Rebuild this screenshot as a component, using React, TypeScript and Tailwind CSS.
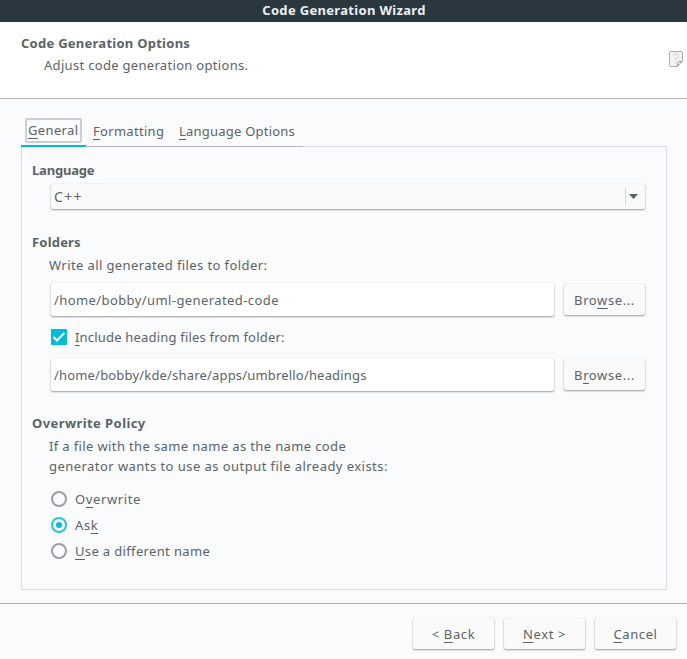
import type { ReactNode } from "react";

const raised =
  "rounded-[2px] bg-[#fafafa] shadow-[0_1px_2px_rgba(0,0,0,0.38),0_0_1px_rgba(0,0,0,0.15)]";

function Key({ children }: { children: ReactNode }) {
  return (
    <span className="underline decoration-1 underline-offset-[3px] [text-decoration-skip-ink:none]">
      {children}
    </span>
  );
}

function Heading({ children, tracking = "tracking-[0.26px]" }: { children: ReactNode; tracking?: string }) {
  return <h2 className={`h-5 text-[13px] leading-5 font-bold ${tracking}`}>{children}</h2>;
}

function Button({ children }: { children: ReactNode }) {
  return (
    <button className={`${raised} h-[31px] w-[81px] shrink-0 text-center tracking-[0.6px]`}>
      {children}
    </button>
  );
}

function PathField({ value, tracking }: { value: string; tracking: string }) {
  return (
    <div
      className={`flex h-[33px] w-[503px] items-center rounded-[2px] bg-white pl-[3px] shadow-[0_1px_2px_rgba(0,0,0,0.38),0_0_1px_rgba(0,0,0,0.15)] ${tracking}`}
    >
      {value}
    </div>
  );
}

function Radio({ checked = false, children }: { checked?: boolean; children: ReactNode }) {
  return (
    <label className="flex h-[26px] items-center gap-2">
      <span
        className={`flex size-4 items-center justify-center rounded-full border-2 ${
          checked ? "border-[#26c6da]" : "border-[#9b9fa1]"
        }`}
      >
        {checked && <span className="size-1.5 rounded-full bg-[#00bcd4]" />}
      </span>
      <span>{children}</span>
    </label>
  );
}

export default function App() {
  return (
    <div className="flex h-[659px] w-[687px] flex-col overflow-hidden bg-[#fafbfd] font-['Noto_Sans',sans-serif] text-[13px] leading-5 tracking-[0.6px] whitespace-nowrap text-[#5a6468]">
      <div className="flex h-[22px] shrink-0 justify-center bg-[#2b373e] font-bold tracking-[0.32px] text-[#eceff1]">
        <span className="pl-px">Code Generation Wizard</span>
      </div>

      <header className="flex h-[77px] shrink-0 justify-between border-b border-[#b6b0ad] bg-white pt-[11px] pr-1 pl-[21px]">
        <div>
          <Heading>Code Generation Options</Heading>
          <p className="pt-0.5 pl-[23px] tracking-[0.31px]">Adjust code generation options.</p>
        </div>
        <svg className="mt-[18px]" width="14" height="16" viewBox="0 0 14 16" fill="none">
          <path d="M1.5.5h11l1 1v8l-5 6h-7l-1-1v-13z" fill="#f4f4f4" stroke="#aaa" />
          <path d="M4 4.5 5 3h3l1 1v2L6.5 8v2M6 12h1" stroke="#dcdcdc" strokeWidth="1.4" />
          <path d="M8.5 15.2v-3l1-1.7h4" fill="#fff" stroke="#999" />
          <path d="m8.5 15.2 5-5.5" stroke="#999" />
        </svg>
      </header>

      <main className="h-[504px] shrink-0 pt-[18px] pr-5 pl-[21px]">
        <nav className="flex h-[29px]">
          <div className="h-[30px] w-[65px] border-b-2 border-[#00bcd4] pt-px pl-1">
            <div className="h-[25px] w-[57px] rounded-[2px] border-2 border-[#cdd0d1] pl-px leading-[21px] tracking-[0.35px]">
              <Key>G</Key>eneral
            </div>
          </div>
          <div className="h-[30px] w-[86px] border-b border-[#b5b9bb] pt-1 pl-[7px] tracking-[0.3px]">
            <Key>F</Key>ormatting
          </div>
          <div className="h-[30px] w-[131px] border-b border-[#b5b9bb] pt-1 pl-[7px] tracking-[0.22px]">
            <Key>L</Key>anguage Options
          </div>
        </nav>

        <section className="h-[444px] border border-[#dcdfe1] pt-[13px] pl-[10px]">
          <Heading tracking="tracking-[-0.2px]">Language</Heading>
          <div className={`${raised} mt-1 ml-[19px] flex h-[25px] w-[594px] items-center pl-[3px]`}>
            <span className="flex-1 text-[14px] tracking-[1.3px]">C++</span>
            <span className="flex h-[17px] w-5 items-center border-l border-[#d5d7d8] pl-[3px]">
              <svg width="9" height="5" viewBox="0 0 9 5">
                <path d="M0 0h9L4.5 5z" fill="#566166" />
              </svg>
            </span>
          </div>

          <div className="pt-[23px]">
            <Heading tracking="tracking-[0.2px]">Folders</Heading>
            <div className="pl-[17px]">
              <p className="pt-[3px] tracking-[0.4px]">Write all generated files to folder:</p>
              <div className="mt-2 ml-0.5 flex items-center gap-[10px]">
                <PathField value="/home/bobby/uml-generated-code" tracking="tracking-[0.41px]" />
                <Button>
                  Bro<Key>w</Key>se...
                </Button>
              </div>
              <label className="mt-[11px] ml-0.5 flex h-5 items-center gap-2">
                <span className="flex size-4 items-center justify-center rounded-[1px] bg-[#00bcd4]">
                  <svg width="14" height="12" viewBox="0 0 14 12" fill="none">
                    <path d="m1.5 6 3.5 3.5L12.3 2" stroke="white" strokeWidth="2" />
                  </svg>
                </span>
                <span className="tracking-[0.19px]">
                  <Key>I</Key>nclude heading files from folder:
                </span>
              </label>
              <div className="mt-[11px] ml-0.5 flex items-center gap-[10px]">
                <PathField
                  value="/home/bobby/kde/share/apps/umbrello/headings"
                  tracking="tracking-[0.18px]"
                />
                <Button>
                  B<Key>r</Key>owse...
                </Button>
              </div>
            </div>
          </div>

          <div className="pt-[22px]">
            <Heading tracking="tracking-[0.42px]">Overwrite Policy</Heading>
            <div className="pl-[17px]">
              <p className="pt-[3px] tracking-[0.37px]">If a file with the same name as the name code</p>
              <p className="tracking-[0.45px]">generator wants to use as output file already exists:</p>
              <div className="pt-[10px] pl-0.5">
                <Radio>
                  O<Key>v</Key>erwrite
                </Radio>
                <Radio checked>
                  As<Key>k</Key>
                </Radio>
                <Radio>
                  <span className="tracking-[0.35px]">
                    <Key>U</Key>se a different name
                  </span>
                </Radio>
              </div>
            </div>
          </div>
        </section>
      </main>

      <footer className="flex h-[56px] shrink-0 justify-end gap-[10px] border-t border-[#adadab] pt-[14px] pr-[11px]">
        <Button>
          &lt; <Key>B</Key>ack
        </Button>
        <Button>
          <Key>N</Key>ext &gt;
        </Button>
        <Button>
          <Key>C</Key>ancel
        </Button>
      </footer>
    </div>
  );
}
